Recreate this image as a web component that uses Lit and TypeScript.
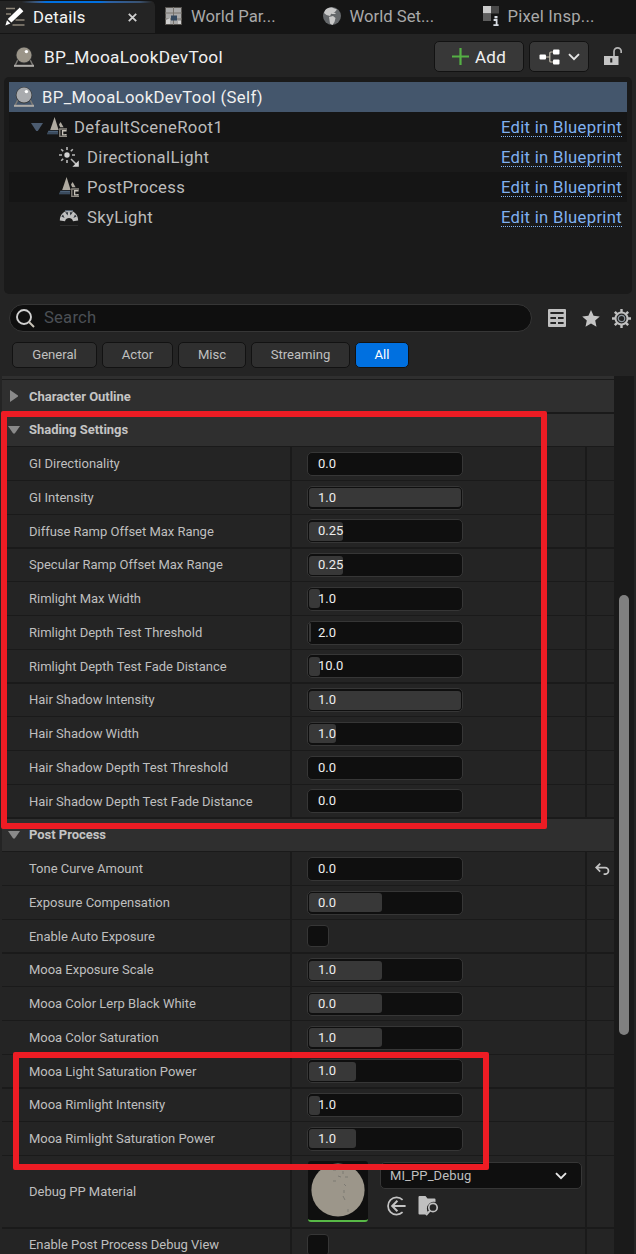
import { LitElement, html, css, svg, nothing, TemplateResult } from "lit";
import { customElement, property } from "lit/decorators.js";
import { classMap } from "lit/directives/class-map.js";

type Row =
  | { kind: "group"; label: string; open: boolean }
  | { kind: "number"; label: string; value: string; fill: number; reset?: boolean }
  | { kind: "check"; label: string }
  | { kind: "asset"; label: string; asset: string };

const num = (label: string, value: string, fill = 0, reset = false): Row => ({ kind: "number", label, value, fill, reset });

const ROWS: Row[] = [
  { kind: "group", label: "Character Outline", open: false },
  { kind: "group", label: "Shading Settings", open: true },
  num("GI Directionality", "0.0"),
  num("GI Intensity", "1.0", 152),
  num("Diffuse Ramp Offset Max Range", "0.25", 34),
  num("Specular Ramp Offset Max Range", "0.25", 34),
  num("Rimlight Max Width", "1.0", 11),
  num("Rimlight Depth Test Threshold", "2.0", 1.5),
  num("Rimlight Depth Test Fade Distance", "10.0", 11),
  num("Hair Shadow Intensity", "1.0", 152),
  num("Hair Shadow Width", "1.0", 27),
  num("Hair Shadow Depth Test Threshold", "0.0"),
  num("Hair Shadow Depth Test Fade Distance", "0.0"),
  { kind: "group", label: "Post Process", open: true },
  num("Tone Curve Amount", "0.0", 0, true),
  num("Exposure Compensation", "0.0", 73),
  { kind: "check", label: "Enable Auto Exposure" },
  num("Mooa Exposure Scale", "1.0", 73),
  num("Mooa Color Lerp Black White", "0.0", 73),
  num("Mooa Color Saturation", "1.0", 73),
  num("Mooa Light Saturation Power", "1.0", 47),
  num("Mooa Rimlight Intensity", "1.0", 11),
  num("Mooa Rimlight Saturation Power", "1.0", 47),
  { kind: "asset", label: "Debug PP Material", asset: "MI_PP_Debug" },
  { kind: "check", label: "Enable Post Process Debug View" },
];

const icon = (w: number, h: number, body: TemplateResult | unknown) =>
  html`<svg width=${w} height=${h} viewBox="0 0 ${w} ${h}" fill="none">${body}</svg>`;

const orb = (tint: string) => icon(20, 20, svg`
  <path d="M4 12.5L1 18.6h18L16 12.5" stroke="#7c7a76" stroke-width="1.4"/>
  <rect x="0" y="17.8" width="20" height="2" fill="#aeaca8"/>
  <circle cx="10" cy="8.2" r="8.2" fill="#3a3a3a"/>
  <circle cx="10" cy="8" r="7.5" fill=${tint}/>
  <circle cx="12.4" cy="4.6" r="1.7" fill="#fff"/>`);

const pencil = icon(20, 20, svg`
  <path d="M1 1.5h9M1 7h5M10.5 13h9M7.5 18h12" stroke="#8d8578" stroke-width="1.3"/>
  <path d="M14.8 0.6l3.6 3.6L6.4 15.6l-3.6-3.6z" fill="#fff"/>
  <path d="M2 13.2l3.4 3.4L0.4 18.6z" fill="#fff"/>`);

const partition = icon(17, 18, svg`
  <rect x="0.5" y="0.5" width="16" height="17" fill="#a9a9a9" stroke="#55524e"/>
  <path d="M8.5 0v18M0 6h17M0 12h17" stroke="#77736d"/>
  <rect x="6" y="8.5" width="6" height="5" fill="#34495f"/>
  <path d="M1 13l4-2v6H1zM13 14h3v3h-3z" fill="#d0d0d0"/>`);

const globe = icon(18, 18, svg`
  <circle cx="9" cy="9" r="9" fill="#65686b"/>
  <path d="M2 3.5C4 1 7 .2 9.5.8L14 2.4 11.5 5.5 8 7l-1 2-3.5-1L1 6z" fill="#c8c8c8"/>
  <path d="M6 10l4-1 2.5 2-1 4-2 3-2.5-1.5z" fill="#c8c8c8"/>
  <path d="M9 6.5h3.5" stroke="#c8c8c8"/>`);

const pixels = icon(17, 20, svg`
  <rect width="8" height="7.5" fill="#cacaca"/>
  <rect x="8" width="8" height="7.5" fill="#494949"/>
  <rect y="7.5" width="8" height="7.5" fill="#5e5e5e"/>
  <rect x="11.5" y="10" width="3" height="2.4" fill="#d6dbe2"/>
  <path d="M10.6 14h3v5M10.4 19.2h5.2" stroke="#d6dbe2" stroke-width="1.8"/>`);

const cone = icon(20, 20, svg`
  <path d="M7.6 0L11.6 13H3.2z" fill="#b0aba1"/>
  <path d="M13.6 5l3 5.2h-3.4L12 7.4z" fill="#b0aba1"/>
  <path d="M1.4 13.8H11v3.4H0z" fill="#4c6178"/>
  <path d="M0.6 16h10.6" stroke="#27323e" stroke-width="0.9"/>
  <path d="M20 12h-7.2v7.5H20" stroke="#8f8a82" stroke-width="1.3"/>
  <path d="M18.9 14.6v-.9h-3.3v4.2h3.3v-.9" stroke="#c8c3b9" stroke-width="1.4"/>`);

const sun = icon(20, 20, svg`
  <circle cx="8" cy="8" r="2.7" fill="#d2d2d2"/>
  <path d="M8 0v3M0 8h3M13 8h3M8 13v3M2.2 2.2l2 2M13.8 2.2l-2 2M2.2 13.8l2-2M12 12l6 6" stroke="#b8b8b8" stroke-width="1.6"/>
  <path d="M19.8 13.4v6.4h-6.4z" fill="#d2d2d2"/>`);

const sky = icon(20, 17, svg`
  <path d="M0.8 11.5C1 -1.5 19 -1.5 19.2 11.5L14 12.2C13 8 7 8 6 12.2z" fill="#c0c0c0"/>
  <path d="M6.2 3.2h3L8.6 6.4zM13.8 3.2h-3l.6 3.2zM2.4 7.4l1.6-2 1.6 3.6zM17.6 7.4l-1.6-2-1.6 3.6z" fill="#30363d"/>
  <path d="M6 1.6h8" stroke="#53606f" stroke-width="1.2"/>
  <path d="M1 16.5h18" stroke="#2e2e2e"/>`);

const tree = icon(21, 16, svg`
  <path d="M6 8h5M14 3h-2.2q-1 0-1 1v8q0 1 1 1H14" stroke="#c4bdb0" stroke-width="1.2"/>
  <rect x="0.5" y="5.5" width="6.5" height="5" rx="1" fill="#fff"/>
  <rect x="14" y="0.5" width="6.5" height="5" rx="1" fill="#fff"/>
  <rect x="14" y="10.5" width="6.5" height="5" rx="1" fill="#fff"/>`);

const lock = icon(18, 19, svg`
  <path d="M10 9V4.5a3.6 3.6 0 0 1 7.2 0V6" stroke="#b4b4b4" stroke-width="1.7"/>
  <path fill-rule="evenodd" d="M0 9h14.5v9H0zM6.2 11.2v4.2h2.1v-4.2z" fill="#c4c4c4"/>`);

const sheet = icon(18, 18, svg`
  <rect width="18" height="18" rx="1" fill="#c0c0c0"/>
  <path d="M2.4 4h13.2M2.4 9h5.6M10 9h5.6M2.4 14h5.6M10 14h5.6" stroke="#242424" stroke-width="2"/>`);

const star = icon(18, 17, svg`<path d="M9 0l2.6 5.7 6.2.7-4.6 4.2 1.3 6.1L9 13.6l-5.5 3.1 1.3-6.1L.2 6.4l6.2-.7z" fill="#c4c4c4"/>`);

const gear = icon(19, 19, svg`
  <circle cx="9.5" cy="9.5" r="6" stroke="#c0c0c0" stroke-width="2"/>
  <circle cx="9.5" cy="9.5" r="3.2" stroke="#8e979f" stroke-width="1.2"/>
  <path d="M9.5 0v3.4M9.5 15.6V19M0 9.5h3.4M15.6 9.5H19M2.8 2.8l2.4 2.4M13.8 13.8l2.4 2.4M16.2 2.8l-2.4 2.4M5.2 13.8l-2.4 2.4" stroke="#c0c0c0" stroke-width="2.4"/>`);

const lens = icon(19, 19, svg`
  <circle cx="8" cy="8" r="7" stroke="#d0d0d0" stroke-width="1.9"/>
  <path d="M13 13l5 5" stroke="#c9c3b8" stroke-width="2"/>`);

const chevron = (w: number) => html`<svg width=${w} height="8" viewBox="0 0 12 8" fill="none"><path d="M1 1.2l5 5 5-5" stroke="#e6e6e6" stroke-width="1.9"/></svg>`;

const undo = icon(15, 12, svg`<path d="M5.2 0.6L1.2 4.6l4 4M1.2 4.6h9a3.3 3.3 0 0 1 0 6.6H8.6" stroke="#c4c4c4" stroke-width="1.7"/>`);

const useArrow = icon(19, 20, svg`
  <path d="M15.6 3.8A8.6 8.6 0 1 0 15.6 16.2" stroke="#c4c4c4" stroke-width="1.7"/>
  <path d="M18.6 10H5.6M10.4 4.8L5.2 10l5.2 5.2" stroke="#c4c4c4" stroke-width="2"/>`);

const browse = icon(21, 20, svg`
  <path d="M0.5 1q0-1 1-1h6l2 2.4h7q1 0 1 1V6a7 7 0 0 0-8.6 6.5q0 2.4 1 3.5L7.7 18.5H1.5q-1 0-1-1z" fill="#c0c0c0"/>
  <circle cx="15" cy="11.5" r="4.2" stroke="#c0c0c0" stroke-width="1.7"/>
  <path d="M12 14.6l-4 4.6" stroke="#c0c0c0" stroke-width="2"/>`);

const arrowDown = icon(12, 8, svg`<path d="M0 0h12L6.8 7.4H5.2z" fill="#8a8a8a"/>`);
const arrowRight = icon(8, 12, svg`<path d="M0 0L8 5.4v1.2L0 12z" fill="#8a8a8a"/>`);

@customElement("tab-bar")
class TabBar extends LitElement {
  static styles = css`
    :host { display: flex; height: 34px; background: #151515; font-size: 16.67px; color: #a9a9a9; }
    .tab { display: flex; align-items: center; padding: 0 0 2px 10px; width: 148.5px; gap: 9px; }
    .active { width: 155px; padding: 0 0 0 5px; gap: 8px; margin-top: 1px; color: #f4f4f4; border-radius: 0 5px 0 0; border-bottom: 1px solid #151515; letter-spacing: 0.25px;
      background: linear-gradient(90deg, #242424 14%, #3a5270 22%, #2a62a8 26%, #0070e0 30%, #0070e0 64%, #2a62a8 70%, #3a5270 90%, #242424 98%) 0 0 / 100% 2px no-repeat, #242424; }
    .tab, .active { box-sizing: border-box; flex: none; }
    .close { margin-left: auto; margin-right: 18px; }
    .label { white-space: nowrap; }
    .world { width: 158px; padding-left: 19px; gap: 9px; }
    .pixel { padding-left: 21px; gap: 8px; letter-spacing: 0.2px; }
    svg { flex: none; }
  `;
  render() {
    return html`
      <div class="tab active">${pencil}<span class="label">Details</span>
        <svg class="close" width="9" height="9" viewBox="0 0 9 9"><path d="M.8.8l7.4 7.4M8.2.8L.8 8.2" stroke="#d0d0d0" stroke-width="1.8"/></svg></div>
      <div class="tab">${partition}<span class="label">World Par...</span></div>
      <div class="tab world">${globe}<span class="label">World Set...</span></div>
      <div class="tab pixel">${pixels}<span class="label">Pixel Insp...</span></div>`;
  }
}

@customElement("component-tree")
class ComponentTree extends LitElement {
  static styles = css`
    :host { display: block; box-sizing: border-box; margin: 0 4px 0 4px; height: 217px; padding: 5px 5px 0; background: #1a1a1a; border-radius: 5px; font-size: 16.67px; letter-spacing: 0.37px; color: #bcbcbc; }
    .row { display: flex; align-items: center; height: 30px; padding: 0 5px; box-sizing: border-box; }
    .row:nth-child(even) { background: #151515; }
    .selected { background: #44566c; color: #f0f0f0; gap: 8px; }
    .child { padding-left: 50px; gap: 8px; }
    .root { padding-left: 22px; }
    .root .twist { margin-right: 4px; }
    .root .name { margin-left: 7px; }
    .twist path { fill: #4c5c70; }
    .link { margin-left: auto; margin-top: 2px; line-height: 17px; letter-spacing: 0.31px; color: #80b0f0; border-bottom: 1px dotted #80b0f0; }
    svg { flex: none; }
  `;
  render() {
    const link = html`<span class="link">Edit in Blueprint</span>`;
    return html`
      <div class="row selected">${orb("#a9abae")}<span>BP_MooaLookDevTool (Self)</span></div>
      <div class="row root"><svg class="twist" width="12" height="8" viewBox="0 0 12 8"><path d="M0 0h12L6.8 8H5.2z"/></svg>${cone}<span class="name">DefaultSceneRoot1</span>${link}</div>
      <div class="row child">${sun}<span>DirectionalLight</span>${link}</div>
      <div class="row child">${cone}<span>PostProcess</span>${link}</div>
      <div class="row child">${sky}<span>SkyLight</span>${link}</div>`;
  }
}

@customElement("number-field")
class NumberField extends LitElement {
  @property() value = "";
  @property({ type: Number }) fill = 0;
  static styles = css`
    :host { display: grid; align-items: center; box-sizing: border-box; width: 156px; height: 24px; margin-top: 0.6px; padding: 1px; background: #0f0f0f; border: 1px solid #363636; border-radius: 5px; }
    .fill { grid-area: 1 / 1; height: 19px; background: #383838; border-radius: 3px; }
    .value { grid-area: 1 / 1; padding-left: 9px; color: #eeeeee; line-height: 18px; }
  `;
  render() {
    return html`${this.fill ? html`<div class="fill" style="width:${this.fill}px"></div>` : nothing}<span class="value">${this.value}</span>`;
  }
}

@customElement("property-list")
class PropertyList extends LitElement {
  static styles = css`
    :host { display: block; box-sizing: border-box; width: 612px; padding-top: 2.7px; background: linear-gradient(#2f2f2f 3px, #1a1a1a 3px); font-size: 13px; letter-spacing: -0.02px; color: #bfbfbf; }
    .row { display: grid; grid-template-columns: 288px 293px 27px; column-gap: 2px; box-sizing: border-box; height: 33.75px; padding-top: 1.25px; }
    .tall { height: 72.5px; }
    .cell { display: flex; align-items: center; background: #242424; min-width: 0; }
    .name { padding-left: 27px; white-space: nowrap; }
    .value { padding-left: 15px; }
    .group { grid-template-columns: 1fr; }
    .head { background: #2f2f2f; font-weight: 700; font-size: 13px; letter-spacing: -0.03px; padding-left: 6px; color: #c4c4c4; }
    .twist { display: flex; width: 21px; }
    .closed .twist { width: 19px; padding-left: 2px; }
    .reset { padding-left: 8px; }
    .check { box-sizing: border-box; width: 22px; height: 22px; background: #0f0f0f; border: 1px solid #363636; border-radius: 4px; }
    .thumb { display: flex; justify-content: center; align-items: center; box-sizing: border-box; width: 60px; height: 61px; margin-left: 1px; padding-bottom: 1px; background: #0f0f0f; border-bottom: 2px solid #58b947; border-radius: 3px; }
    .ball { width: 54px; height: 54px; }
    .asset { display: flex; flex-direction: column; margin-left: 12px; gap: 7px; padding-bottom: 5px; }
    .combo { display: flex; align-items: center; justify-content: space-between; box-sizing: border-box; width: 202px; height: 27px; padding: 0 14px 0 9px; background: #0f0f0f; border: 1px solid #363636; border-radius: 5px; letter-spacing: 0.1px; }
    .tools { display: flex; gap: 12px; padding-left: 7px; }
  `;
  private cell(r: Row) {
    if (r.kind === "number") return html`<number-field .value=${r.value} .fill=${r.fill}></number-field>`;
    if (r.kind === "check") return html`<div class="check"></div>`;
    if (r.kind === "asset")
      return html`<div class="thumb"><svg class="ball" viewBox="0 0 54 54"><circle cx="27" cy="27" r="26.6" fill="#9c968a"/>
          <path d="M22 7h3M32 8v3M27 13l3 1M34 14h3M22 18h3M33 21l2 2M33 27v3M32 33l2 4M37 46v3" stroke="#7d7a73"/></svg></div>
        <div class="asset"><div class="combo"><span>${r.asset}</span>${chevron(12)}</div><div class="tools">${useArrow}${browse}</div></div>`;
    return nothing;
  }
  render() {
    return ROWS.map((r) =>
      r.kind === "group"
        ? html`<div class=${classMap({ row: true, group: true, closed: !r.open })}><div class="cell head"><span class="twist">${r.open ? arrowDown : arrowRight}</span>${r.label}</div></div>`
        : html`<div class=${classMap({ row: true, tall: r.kind === "asset" })}>
            <div class="cell name">${r.label}</div>
            <div class="cell value">${this.cell(r)}</div>
            <div class="cell reset">${r.kind === "number" && r.reset ? undo : nothing}</div>
          </div>`);
  }
}

@customElement("app-root")
class AppRoot extends LitElement {
  static styles = css`
    :host { display: flex; flex-direction: column; position: relative; width: 636px; height: 1254px; overflow: hidden; background: #242424; font-family: Roboto, sans-serif; color: #c0c0c0; }
    .title { display: flex; align-items: center; box-sizing: border-box; height: 43px; padding: 2px 14px 0 14px; font-size: 17.3px; color: #f0f0f0; }
    .title .text { margin-left: 10px; margin-right: auto; letter-spacing: 0.3px; }
    .btn { display: flex; align-items: center; justify-content: center; box-sizing: border-box; height: 31px; background: #383838; border: 1px solid #121212; border-radius: 5px; font-size: 17px; letter-spacing: 0.3px; }
    .add { width: 90px; gap: 6px; margin-right: 5px; }
    .hier { width: 60px; gap: 8px; margin-right: 15px; }
    .search { display: flex; align-items: center; height: 28px; margin: 10px 4px 0 9px; }
    .box { display: flex; align-items: center; gap: 9px; box-sizing: border-box; width: 523px; height: 28px; padding-left: 6px; background: #0f0f0f; border: 1px solid #363636; border-radius: 14px; font-size: 16.67px; letter-spacing: 0.2px; color: #4b4f55; }
    .box span { padding-bottom: 2px; }
    .tools { display: flex; align-items: center; gap: 16px; margin-left: 16px; }
    .tools svg { flex: none; }
    .gear { display: flex; margin-left: -4px; }
    .filters { display: flex; gap: 5px; padding: 10px 0 8px 12px; font-size: 13.1px; }
    .filter { display: flex; align-items: center; justify-content: center; box-sizing: border-box; height: 26px; padding-bottom: 2px; background: #2f2f2f; border: 1px solid #121212; border-radius: 5px; }
    .on { background: #0070e0; color: #fff; }
    .body { display: flex; padding-left: 2px; flex: none; height: 878px; overflow: hidden; }
    .track { box-sizing: border-box; width: 20px; padding: 219px 5px 0; background: #1a1a1a; }
    .thumb { height: 440px; border-radius: 5px; background: #808080; }
    .mark { position: absolute; box-sizing: border-box; border: 6px solid #ed1c24; border-radius: 2px; }
    .shading { left: 1px; top: 411px; width: 546px; height: 418px; }
    .mooa { left: 13px; top: 1052px; width: 476px; height: 118px; }
  `;
  render() {
    const filters: [string, number][] = [["General", 85], ["Actor", 71], ["Misc", 68], ["Streaming", 99], ["All", 54]];
    return html`
      <tab-bar></tab-bar>
      <div class="title">${orb("#9b9589")}<span class="text">BP_MooaLookDevTool</span>
        <div class="btn add"><svg width="17" height="17" viewBox="0 0 17 17"><path d="M8.5 0v17M0 8.5h17" stroke="#55b045" stroke-width="2.2"/></svg>Add</div>
        <div class="btn hier">${tree}${chevron(12)}</div>${lock}
      </div>
      <component-tree></component-tree>
      <div class="search"><div class="box">${lens}<span>Search</span></div>
        <div class="tools">${sheet}${star}<span class="gear">${gear}</span></div></div>
      <div class="filters">${filters.map(([t, w]) => html`<div class=${classMap({ filter: true, on: t === "All" })} style="width:${w}px">${t}</div>`)}</div>
      <div class="body"><property-list></property-list><div class="track"><div class="thumb"></div></div></div>
      <div class="mark shading"></div><div class="mark mooa"></div>`;
  }
}
